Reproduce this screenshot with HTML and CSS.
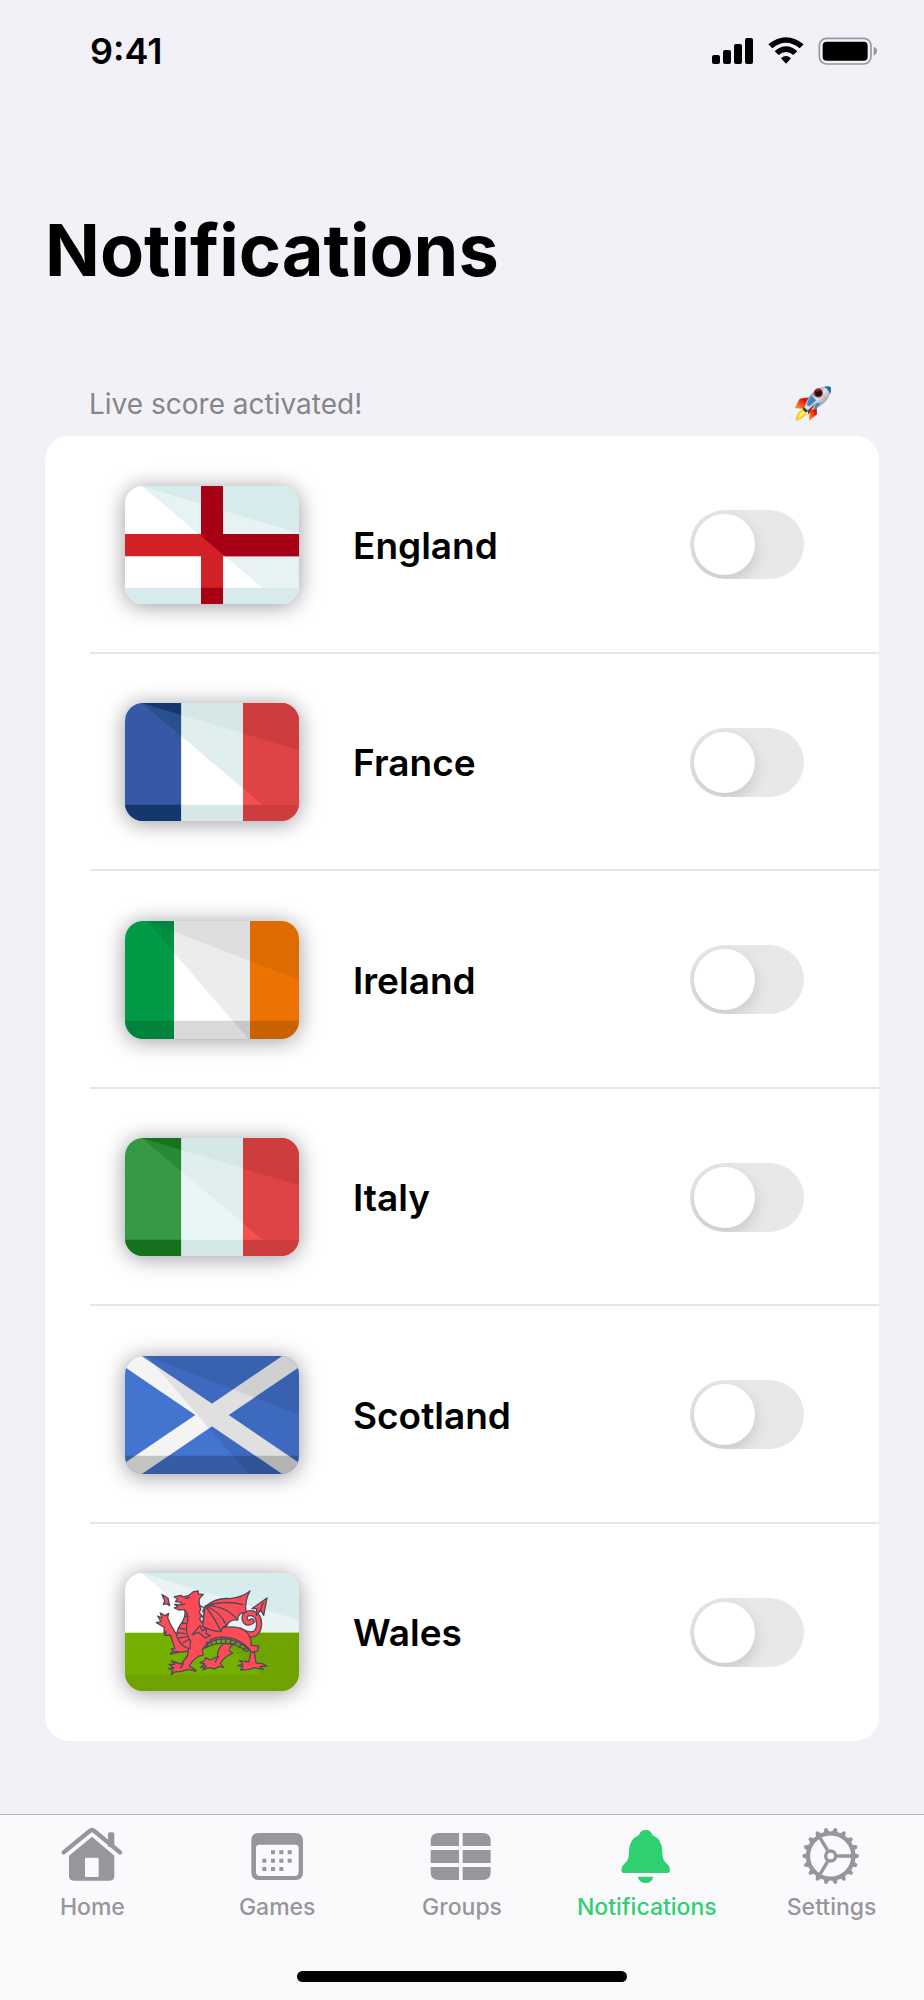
FILE: index.html
```html
<!DOCTYPE html>
<html lang="en">
<head>
<meta charset="utf-8">
<meta name="viewport" content="width=device-width, initial-scale=1">
<title>Notifications</title>
<link rel="stylesheet" href="styles.css">
</head>
<body>
<header class="status">
  <time class="status-time">9:41</time>
  <div class="status-icons">
    <svg width="42" height="28" viewBox="0 0 42 28" aria-hidden="true">
      <rect x="0" y="18" width="8" height="9" rx="2"/><rect x="11" y="13" width="8" height="14" rx="2"/><rect x="22" y="7" width="8" height="20" rx="2"/><rect x="33" y="1" width="8" height="26" rx="2"/>
    </svg>
    <svg width="36" height="28" viewBox="0 0 108 84" aria-hidden="true">
      <path d="M1 22Q54-20 107 22L95 34Q54 1 13 34Z"/>
      <path d="M20 43Q54 13 88 43L76 54Q54 36 32 54Z"/>
      <path d="M39 64Q54 50 69 64L54 80Z"/>
    </svg>
    <svg width="60" height="28" viewBox="0 0 180 84" aria-hidden="true">
      <rect x="4" y="4" width="155" height="77" rx="22" fill="none" stroke="#98979b" stroke-width="5"/>
      <rect x="14" y="14" width="135" height="57" rx="12"/>
      <path d="M167 29Q177 32 177 42T167 56Z" fill="#98979b"/>
    </svg>
  </div>
</header>

<main class="page">
  <h1 class="title">Notifications</h1>
  <div class="section-head">
    <p class="section-label">Live score activated!</p>
    <svg class="rocket" viewBox="0 0 114 108" role="img" aria-label="Rocket">
      <defs>
        <linearGradient id="hull" x1="0" y1="0" x2="1" y2="1"><stop offset=".2" stop-color="#4581b6"/><stop offset=".48" stop-color="#dfe7ec"/><stop offset=".68" stop-color="#a9adb0"/><stop offset=".85" stop-color="#34434d"/></linearGradient>
        <linearGradient id="fin" x1="1" y1="0" x2="0" y2="1"><stop offset=".3" stop-color="#e50e08"/><stop offset="1" stop-color="#ffae28"/></linearGradient>
      </defs>
      <path d="M2 67L17 38 47 34 33 68Z" fill="url(#fin)"/>
      <path d="M45 105L47 76 68 62 69 85Z" fill="url(#fin)"/>
      <path d="M5 106Q6 75 30 68L39 77Q38 93 5 106Z" fill="#ffc629"/>
      <path d="M12 98Q16 79 31 73L34 79Q29 90 12 98Z" fill="#fff25b"/>
      <path d="M30 68Q43 17 84 4Q101-2 110 3Q113 17 103 35Q86 63 43 75Z" fill="url(#hull)"/>
      <path d="M90 2Q104-1 110 3Q113 13 108 25Q104 10 90 2Z" fill="#286ba3"/>
      <path d="M38 57Q43 39 52 29L67 43 47 61Z" fill="#4386bd"/>
      <path d="M59 72L66 52 79 50Q72 66 59 72Z" fill="#4589bd"/>
      <path d="M30 64L43 76 34 79 26 70Z" fill="#283c47"/>
      <path d="M65 51L45 82 41 86 43 73Z" fill="#921411"/>
      <circle cx="73" cy="21" r="12" fill="#171416" stroke="#c82529" stroke-width="4"/>
      <path d="M65 19Q69 11 78 14" fill="none" stroke="#746b75" stroke-width="2"/>
    </svg>
  </div>

  <ul class="list">
    <li class="row">
      <svg class="flag" viewBox="0 0 522 354" aria-hidden="true">
        <path fill="#fff" d="M0 0H522V354H0Z"/><path fill="#e7f2f3" d="M50 0L412 305H522V0Z"/><path fill="#d7ebec" d="M50 0L522 142V0ZM0 305H522V354H0Z"/>
        <path fill="#d32027" d="M0 144H228V0H294V144H522V211H294V354H228V211H0Z"/>
        <path fill="#a80014" d="M228 0H294V144H522V211H300L228 150ZM228 305H294V354H228Z"/>
      </svg>
      <label class="name" for="england">England</label>
      <input class="switch" type="checkbox" role="switch" id="england">
    </li>
    <li class="row">
      <svg class="flag" viewBox="0 0 522 354" aria-hidden="true">
        <path fill="#3758a5" d="M0 0H169V354H0Z"/><path fill="#fff" d="M169 0H354V354H169Z"/><path fill="#f35050" d="M354 0H522V354H354Z"/>
        <path fill="#27508f" d="M50 0L169 100V0Z"/><path fill="#e0efee" d="M169 0H354V256L169 100Z"/><path fill="#de4444" d="M354 0H522V305H412L354 256Z"/>
        <path fill="#14386e" d="M50 0L169 36V0ZM0 305H169V354H0Z"/><path fill="#d5e8e7" d="M169 0H354V91L169 36ZM169 305H354V354H169Z"/><path fill="#cd3d3d" d="M354 0H522V142L354 91ZM354 305H522V354H354Z"/>
      </svg>
      <label class="name" for="france">France</label>
      <input class="switch" type="checkbox" role="switch" id="france">
    </li>
    <li class="row">
      <svg class="flag" viewBox="0 0 522 354" aria-hidden="true">
        <path fill="#019b48" d="M0 0H147V354H0Z"/><path fill="#fff" d="M147 0H375V354H147Z"/><path fill="#ff7c02" d="M375 0H522V354H375Z"/>
        <path opacity=".075" d="M65 0L370 354H522V0Z"/><path opacity=".06" d="M65 0L522 177V0Z"/><path opacity=".15" d="M0 299H522V354H0Z"/>
      </svg>
      <label class="name" for="ireland">Ireland</label>
      <input class="switch" type="checkbox" role="switch" id="ireland">
    </li>
    <li class="row">
      <svg class="flag" viewBox="0 0 522 354" aria-hidden="true">
        <path fill="#379846" d="M0 0H169V354H0Z"/><path fill="#eaf6f6" d="M169 0H354V354H169Z"/><path fill="#f35050" d="M354 0H522V354H354Z"/>
        <path fill="#278a33" d="M50 0L169 100V0Z"/><path fill="#e0efee" d="M169 0H354V256L169 100Z"/><path fill="#de4444" d="M354 0H522V305H412L354 256Z"/>
        <path fill="#17721d" d="M50 0L169 36V0ZM0 305H169V354H0Z"/><path fill="#d5e8e7" d="M169 0H354V91L169 36ZM169 305H354V354H169Z"/><path fill="#cd3d3d" d="M354 0H522V142L354 91ZM354 305H522V354H354Z"/>
      </svg>
      <label class="name" for="italy">Italy</label>
      <input class="switch" type="checkbox" role="switch" id="italy">
    </li>
    <li class="row">
      <svg class="flag" viewBox="0 0 522 354" aria-hidden="true">
        <path fill="#4374cf" d="M0 0H522V354H0Z"/><path stroke="#f4f4f4" stroke-width="56" d="M-20-14L542 368M542-14L-20 368"/>
        <path opacity=".08" d="M65 0L370 354H522V0Z"/><path opacity=".07" d="M65 0L522 177V0Z"/><path opacity=".2" d="M0 299H522V354H0Z"/>
      </svg>
      <label class="name" for="scotland">Scotland</label>
      <input class="switch" type="checkbox" role="switch" id="scotland">
    </li>
    <li class="row">
      <svg class="flag" viewBox="0 0 522 354" aria-hidden="true">
        <path fill="#fff" d="M0 0H522V179H0Z"/><path fill="#eaf3f4" d="M50 0L262 179H522V0Z"/><path fill="#d9eced" d="M50 0L522 142V0Z"/>
        <path fill="#75b000" d="M0 179H522V354H0Z"/><path fill="#6fa300" d="M262 179L412 305H0V354H522V179Z"/>
        <g transform="translate(-45 -53)" fill="#ff4b55" stroke="#4c4a5d" stroke-width="4" stroke-linejoin="round" stroke-linecap="round">
          <path d="M156 118L174 128 179 151 170 145 160 148 164 136Z"/>
          <path d="M390 226Q437 252 446 217Q452 182 427 174Q402 171 404 191Q409 208 425 198" fill="none" stroke-width="19"/>
          <path d="M390 226Q437 252 446 217Q452 182 427 174Q402 171 404 191Q409 208 425 198" fill="none" stroke="#ff4b55" stroke-width="11"/>
          <path d="M426 160L471 128 461 180 452 164 439 180 440 160Z"/>
          <path d="M452 162L459 143" fill="none"/>
          <path d="M241 287L205 291 181 296 190 288 184 281 195 280 181 239 164 240 169 228 162 234 163 216 151 209 139 202 153 199 143 182 156 188 151 173 166 181 176 174 173 187 181 206 201 240 219 265 238 270Z"/>
          <path d="M340 265Q321 280 323 304L300 314 287 307 283 317 270 322 284 326 272 336 289 332 278 343 300 337 314 341 326 333 341 336 331 324Q346 302 361 297L369 293 358 287Q358 272 374 265Z"/>
          <path d="M193 124L213 120 220 125 237 120 250 109 265 107 264 116 280 117 268 130Q265 151 277 173L285 207Q300 225 331 218Q382 208 407 228Q424 242 424 270L446 272 443 287 433 289 438 323 457 325 470 333 449 333 460 342 434 337 416 343 392 344 399 334 384 331 399 327 388 315 404 318 416 320 423 290Q394 257 346 250Q303 250 277 282L279 300 267 302Q245 316 238 333L250 339 258 347 233 342 215 348 194 350 184 357 188 345 176 340 192 338 177 327 195 327 184 317 202 323 214 326 232 302 236 280Q210 271 201 244Q197 226 218 198Q228 181 224 163L206 164 193 158 204 154 194 147 213 148 214 141 196 139 203 132Z"/>
          <path d="M226 166Q238 180 231 207Q224 232 243 259M224 184L236 183M216 203L230 205M205 217L225 222M202 232L225 235M207 248L230 244M219 263L237 252M278 282Q304 237 352 246Q395 252 421 285L408 288Q384 266 354 265Q317 260 280 280M290 259L292 276M303 251L306 269M318 246L319 264M333 245L334 263M348 246L347 264M365 249L360 266M380 255L374 269M395 264L387 276M409 276L399 284" fill="none"/>
          <path d="M268 150L283 158 278 168 285 176 277 184 283 193 275 201 269 190 275 180 268 172 272 160Z" fill="#e8e5ea"/>
          <path d="M285 154Q318 126 359 130Q399 126 420 107Q403 136 408 171Q383 171 383 194Q357 191 350 212Q336 213 333 229Q306 228 278 213Z"/>
          <path d="M286 152Q345 133 399 148M286 152Q343 148 383 193M286 152Q331 169 350 211M286 152Q317 193 333 229" fill="none"/>
          <path d="M246 239L270 211 277 227 289 217 288 235 301 241 286 248 275 239 265 231Z"/>
          <path d="M226 129L239 126M224 146L215 148M241 260L240 280M204 289L194 289M326 304L315 320M221 324L211 338M434 290L424 291" fill="none"/>
        </g>
      </svg>
      <label class="name" for="wales">Wales</label>
      <input class="switch" type="checkbox" role="switch" id="wales">
    </li>
  </ul>
</main>

<footer class="dock">
  <nav class="tabs" aria-label="Main">
    <a class="tab" href="#home">
      <svg class="tab-icon" viewBox="0 0 192 180" aria-hidden="true">
        <path d="M144 62V25Q144 19 150 19H157Q163 19 163 25V65Z"/>
        <path d="M11 79L89 15Q96 9 103 15L180 79" fill="none" stroke="currentColor" stroke-width="13" stroke-linecap="round"/>
        <path fill-rule="evenodd" d="M96 32L163 89V150Q163 164 149 164H41Q27 164 27 150V89ZM79 95Q75 95 75 99V149Q75 153 79 153H112Q116 153 116 149V99Q116 95 112 95Z"/>
      </svg>
      <span>Home</span>
    </a>
    <a class="tab" href="#games">
      <svg class="tab-icon" viewBox="0 0 192 180" aria-hidden="true">
        <path fill-rule="evenodd" d="M42 21H151Q174 21 174 44V139Q174 162 151 162H42Q19 162 19 139V44Q19 21 42 21ZM43 56Q33 56 33 66V138Q33 150 45 150H149Q161 150 161 138V66Q161 56 151 56Z"/>
        <path d="M78 73h12v12h-12zM103 73h12v12h-12zM128 73h12v12h-12zM52 98h12v12h-12zM78 98h12v12h-12zM103 98h12v12h-12zM128 98h12v12h-12zM52 123h12v12h-12zM78 123h12v12h-12zM103 123h12v12h-12z"/>
      </svg>
      <span>Games</span>
    </a>
    <a class="tab" href="#groups">
      <svg class="tab-icon" viewBox="0 0 192 180" aria-hidden="true">
        <path d="M87 21V60H2V45Q2 21 26 21ZM98 21H158Q182 21 182 45V60H98ZM2 72H87V111H2ZM98 72H182V111H98ZM2 123H87V162H26Q2 162 2 138ZM98 123H182V138Q182 162 158 162H98Z"/>
      </svg>
      <span>Groups</span>
    </a>
    <a class="tab tab-active" href="#notifications" aria-current="page">
      <svg class="tab-icon" viewBox="0 0 192 180" aria-hidden="true">
        <path d="M92 12Q107 12 113 28Q142 40 142 77Q142 99 150 107L160 118Q165 124 165 131Q165 141 155 141H29Q19 141 19 131Q19 124 24 118L34 107Q42 99 42 77Q42 40 71 28Q77 12 92 12ZM68 152H115Q110 171 92 171T68 152Z"/>
      </svg>
      <span>Notifications</span>
    </a>
    <a class="tab" href="#settings">
      <svg class="tab-icon" viewBox="0 0 192 180" aria-hidden="true">
        <defs>
          <path id="tooth" d="M-9-70L-5-82Q0-88 5-82L9-70Z"/>
          <g id="teeth"><use href="#tooth" transform="rotate(10)"/><use href="#tooth" transform="rotate(30)"/><use href="#tooth" transform="rotate(50)"/><use href="#tooth" transform="rotate(70)"/><use href="#tooth" transform="rotate(90)"/><use href="#tooth" transform="rotate(110)"/></g>
        </defs>
        <g transform="translate(92 90)">
          <use href="#teeth"/><use href="#teeth" transform="rotate(120)"/><use href="#teeth" transform="rotate(240)"/>
          <circle r="68" fill="none" stroke="currentColor" stroke-width="13"/>
          <circle r="15" fill="none" stroke="currentColor" stroke-width="10"/>
          <path d="M18 0H64M-9-16L-32-55M-9 16L-32 55" stroke="currentColor" stroke-width="10"/>
        </g>
      </svg>
      <span>Settings</span>
    </a>
  </nav>
  <div class="home-bar"></div>
</footer>
</body>
</html>
```

FILE: styles.css
```css
* { box-sizing: border-box; }

body {
  margin: 0;
  min-height: 100vh;
  display: flex;
  flex-direction: column;
  background: #f2f1f7;
  color: #000;
  font-family: Inter, "Liberation Sans", sans-serif;
}

.status {
  display: flex;
  justify-content: space-between;
  align-items: center;
  height: 102px;
  padding: 0 46px 0 90px;
}

.status-time {
  font-size: 36px;
  line-height: 40px;
  font-weight: 600;
}

.status-icons {
  display: flex;
  align-items: center;
  gap: 14px;
}

.page {
  flex: 1;
  display: flex;
  flex-direction: column;
  padding: 104px 45px 73px;
}

.title {
  margin: 0;
  font-size: 72px;
  line-height: 88px;
  font-weight: 700;
}

.section-head {
  display: flex;
  justify-content: space-between;
  align-items: center;
  margin-top: 88px;
  padding: 0 47px 0 44px;
  height: 44px;
}

.section-label {
  margin: 0;
  font-size: 28px;
  line-height: 36px;
  color: #86858a;
}

.rocket {
  width: 38px;
  height: 36px;
}

.list {
  flex: 1;
  display: grid;
  grid-auto-rows: 1fr;
  margin: 10px 0 0;
  padding: 0;
  list-style: none;
  background: #fff;
  border-radius: 24px;
}

.row {
  display: flex;
  align-items: center;
  padding: 42px 75px 40px 35px;
  margin-left: 45px;
  border-bottom: 2px solid #e6e6e8;
}

.row:last-child { border-bottom-color: transparent; }

.flag {
  flex: none;
  width: 174px;
  height: 118px;
  border-radius: 18px;
  box-shadow: 0 2px 22px rgba(0, 0, 20, .4);
}

.name {
  flex: 1;
  padding: 2px 0 0 54px;
  font-size: 37px;
  line-height: 44px;
  font-weight: 600;
}

.switch {
  appearance: none;
  flex: none;
  display: flex;
  width: 114px;
  height: 69px;
  margin: 0;
  padding: 4px;
  border-radius: 35px;
  overflow: hidden;
  background: #e8e8ea;
  cursor: pointer;
}

.switch::before {
  content: "";
  width: 61px;
  height: 61px;
  border-radius: 50%;
  background: #fff;
  box-shadow: 0 6px 16px rgba(0, 0, 0, .15);
}

.switch:checked {
  justify-content: flex-end;
  background: #2ed070;
}

.dock {
  background: #fafafd;
  border-top: 1px solid #b9b8bd;
  padding: 11px 0 18px;
}

.tabs {
  display: grid;
  grid-template-columns: repeat(5, 1fr);
}

.tab {
  display: flex;
  flex-direction: column;
  align-items: center;
  gap: 7px;
  color: #97969b;
  font-size: 23px;
  line-height: 28px;
  font-weight: 500;
  text-decoration: none;
}

.tab-active { color: #2ed070; }

.tab-icon {
  width: 64px;
  height: 60px;
  fill: currentColor;
}

.home-bar {
  width: 330px;
  max-width: 60%;
  height: 11px;
  margin: 50px auto 0;
  border-radius: 6px;
  background: #000;
}
```
